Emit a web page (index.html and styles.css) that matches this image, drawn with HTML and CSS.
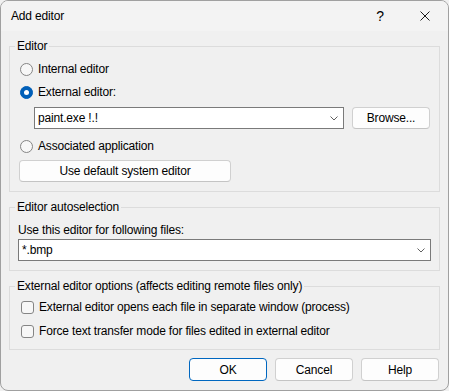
FILE: index.html
```html
<!DOCTYPE html>
<html lang="en">
<head>
    <meta charset="UTF-8">
    <title>Add editor</title>
    <link rel="stylesheet" href="styles.css">
</head>
<body>
    <div class="dialog">
        <div class="titlebar">
            <span class="title">Add editor</span>
            <span class="title-help">?</span>
            <span class="title-close">
                <svg width="10" height="10" viewBox="0 0 10 10"><path d="M0.5 0.5 L9.5 9.5 M9.5 0.5 L0.5 9.5" stroke="#1a1a1a" stroke-width="1" fill="none"/></svg>
            </span>
        </div>

        <div class="content">
            <!-- Editor group -->
            <fieldset class="group">
                <legend>Editor</legend>
                <div class="group-body editor-body">
                    <label class="option"><span class="radio"></span>Internal editor</label>
                    <label class="option row-gap"><span class="radio checked"></span>External editor:</label>
                    <div class="editor-row">
                        <div class="combo combo-editor">
                            <span class="combo-text">paint.exe !.!</span>
                            <svg class="chevron" width="8" height="5" viewBox="0 0 8 5"><path d="M0.5 0.5 L4 4 L7.5 0.5" stroke="#606060" fill="none"/></svg>
                        </div>
                        <button class="btn">Browse...</button>
                    </div>
                    <label class="option assoc"><span class="radio"></span>Associated application</label>
                    <button class="btn btn-default">Use default system editor</button>
                </div>
            </fieldset>

            <!-- Autoselection group -->
            <fieldset class="group">
                <legend>Editor autoselection</legend>
                <div class="group-body auto-body">
                    <div class="field-label">Use this editor for following files:</div>
                    <div class="combo combo-mask">
                        <span class="combo-text">*.bmp</span>
                        <svg class="chevron" width="8" height="5" viewBox="0 0 8 5"><path d="M0.5 0.5 L4 4 L7.5 0.5" stroke="#606060" fill="none"/></svg>
                    </div>
                </div>
            </fieldset>

            <!-- External editor options -->
            <fieldset class="group">
                <legend>External editor options (affects editing remote files only)</legend>
                <div class="group-body options-body">
                    <label class="option"><span class="checkbox"></span>External editor opens each file in separate window (process)</label>
                    <label class="option check-gap"><span class="checkbox"></span>Force text transfer mode for files edited in external editor</label>
                </div>
            </fieldset>

            <div class="buttons">
                <button class="btn btn-ok">OK</button>
                <button class="btn">Cancel</button>
                <button class="btn">Help</button>
            </div>
        </div>
    </div>
</body>
</html>
```

FILE: styles.css
```css
/* Page */
body {
    margin: 0;
    background-color: #f0f0f0;
    font-family: "Liberation Sans", Arial, sans-serif;
    font-size: 12px;
    letter-spacing: -0.17px;
    color: #000;
}

/* Window frame */
.dialog {
    width: 449px;
    height: 391px;
    box-sizing: border-box;
    border: 1px solid #a0a0a0;
    border-radius: 8px;
    overflow: hidden;
    background-color: #f0f0f0;
}

.titlebar {
    height: 30px;
    display: flex;
    align-items: center;
    background-color: #f3f3f3;
}

.title {
    margin-left: 10px;
    flex-grow: 1;
    line-height: 16px;
}

.title-help {
    width: 10px;
    margin-right: 35px;
    font-size: 14px;
    text-align: center;
}

.title-close {
    display: flex;
    margin-right: 18px;
}

/* Dialog content */
.content {
    padding: 7px 8px 0 8px;
}

.group {
    margin: 0 0 7px 0;
    padding: 0;
    min-width: 0;
    border: 1px solid #dcdcdc;
}

.group legend {
    margin-left: 5px;
    padding: 0 2px;
    line-height: 16px;
}

.group-body {
    display: flex;
    flex-direction: column;
    align-items: flex-start;
}

.editor-body {
    padding: 7px 9px 9px 9px;
}

.auto-body {
    padding: 7px 8px 9px 8px;
}

.options-body {
    padding: 5px 9px 10px 10px;
}

/* Radios and checkboxes */
.option {
    display: flex;
    align-items: center;
    height: 16px;
    line-height: 16px;
}

.row-gap {
    margin-top: 7px;
}

.assoc {
    margin-top: 9px;
}

.check-gap {
    margin-top: 8px;
}

.radio {
    width: 11px;
    height: 11px;
    margin: 0 5px 0 1px;
    border: 1px solid #858585;
    border-radius: 50%;
    background-color: #f7f7f7;
    position: relative;
}

.radio.checked {
    border-color: #005fb8;
    background-color: #005fb8;
}

.radio.checked::after {
    content: "";
    position: absolute;
    left: 3px;
    top: 3px;
    width: 5px;
    height: 5px;
    border-radius: 50%;
    background-color: #fff;
}

.checkbox {
    width: 11px;
    height: 11px;
    margin: 0 5px 0 1px;
    border: 1px solid #858585;
    border-radius: 3px;
    background-color: #f7f7f7;
}

/* Combo boxes */
.editor-row {
    display: flex;
    gap: 8px;
    margin: 7px 0 0 15px;
}

.combo {
    height: 22px;
    box-sizing: border-box;
    display: flex;
    align-items: center;
    padding: 0 5px 0 3px;
    border: 1px solid #7a7a7a;
    background-color: #fff;
}

.combo-text {
    flex-grow: 1;
}

.combo-editor {
    width: 310px;
}

.combo-mask {
    width: 413px;
    margin-top: 1px;
}

.chevron {
    margin-top: 1px;
}

.field-label {
    line-height: 16px;
}

/* Buttons */
.btn {
    height: 22px;
    width: 78px;
    padding: 0;
    font-family: inherit;
    font-size: 12px;
    letter-spacing: inherit;
    color: #000;
    background-color: #fdfdfd;
    border: 1px solid #d0d0d0;
    border-bottom-color: #c4c4c4;
    border-radius: 4px;
}

.btn-default {
    width: 212px;
    margin-top: 6px;
}

.buttons {
    display: flex;
    justify-content: flex-end;
    gap: 8px;
    margin-top: 8px;
    padding-right: 1px;
}

.buttons .btn {
    height: 23px;
}

.btn-ok {
    border: 1px solid #0067c0;
}
```
